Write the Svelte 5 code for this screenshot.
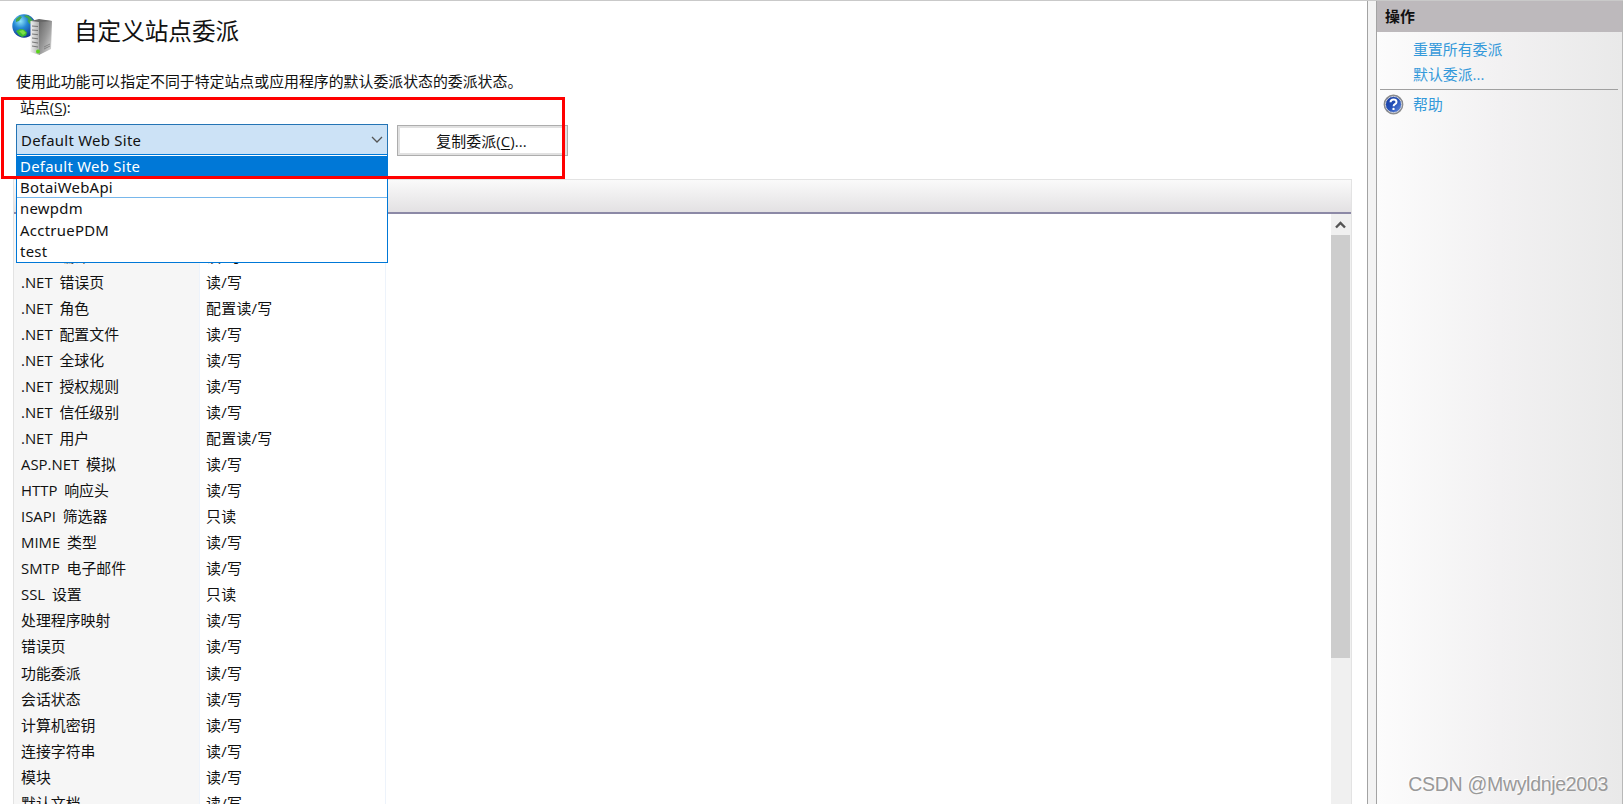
<script>
	const sites = ['Default Web Site', 'BotaiWebApi', 'newpdm', 'AcctruePDM', 'test'];
	let selected = $state(sites[0]);
	let open = $state(true);

	/** @type {[string, string][]} */
	const features = [
		['.NET 编译', '读/写'],
		['.NET 错误页', '读/写'],
		['.NET 角色', '配置读/写'],
		['.NET 配置文件', '读/写'],
		['.NET 全球化', '读/写'],
		['.NET 授权规则', '读/写'],
		['.NET 信任级别', '读/写'],
		['.NET 用户', '配置读/写'],
		['ASP.NET 模拟', '读/写'],
		['HTTP 响应头', '读/写'],
		['ISAPI 筛选器', '只读'],
		['MIME 类型', '读/写'],
		['SMTP 电子邮件', '读/写'],
		['SSL 设置', '只读'],
		['处理程序映射', '读/写'],
		['错误页', '读/写'],
		['功能委派', '读/写'],
		['会话状态', '读/写'],
		['计算机密钥', '读/写'],
		['连接字符串', '读/写'],
		['模块', '读/写'],
		['默认文档', '读/写']
	];

	/** @param {string} site */
	const choose = (site) => {
		selected = site;
		open = false;
	};
</script>

<div class="window">
	<main>
		<header>
			<svg class="logo" width="44" height="44" viewBox="0 0 44 44">
				<defs>
					<radialGradient id="globe" cx=".35" cy=".3" r=".75">
						<stop offset="0" stop-color="#8fe4f8" />
						<stop offset=".4" stop-color="#2688d5" />
						<stop offset="1" stop-color="#12328c" />
					</radialGradient>
					<linearGradient id="front">
						<stop offset="0" stop-color="#f0f0f0" />
						<stop offset="1" stop-color="#aaa" />
					</linearGradient>
					<linearGradient id="side" x2="1" y2="1">
						<stop offset="0" stop-color="#666" />
						<stop offset=".5" stop-color="#999" />
						<stop offset="1" stop-color="#e0e0e0" />
					</linearGradient>
				</defs>
				<circle cx="13" cy="13" r="11.7" fill="url(#globe)" />
				<path d="M13 3q4-2 7 2 3 3 3.500 6l-3-1-2 1-2-3 1-2zM5 6l4-3 2 1-3 4-3 1z" fill="#42a84d" />
				<path d="M5 18l4-2 4 .5 3 3-1 3-4 1.500q-4-2-6-6z" fill="#3dbb30" />
				<path d="M8 18l4-1 3 3-3 2z" fill="#7cdf48" />
				<path d="M19.500 8l9-1v35l-9-3z" fill="url(#front)" />
				<path d="M28 7l13 1-1 28-12 6z" fill="url(#side)" />
				<path d="M20 8l8-2 13 2-13 1z" fill="#666" />
				<path d="M21 13l6 .5M21 17l6 .5M21 21l6 .7M21 25l6 .8M21 29l6 1M21 33l6 1" stroke="#777" />
				<path d="M33 34l6-3M33 36l6-3" stroke="#777" stroke-width=".8" />
				<circle cx="27" cy="38.500" r="2" fill="#5ad21b" />
			</svg>
			<h1>自定义站点委派</h1>
		</header>

		<p>使用此功能可以指定不同于特定站点或应用程序的默认委派状态的委派状态。</p>

		<div class="label">站点(<u>S</u>):</div>
		<div class="controls">
			<div class="combo">
				<button class="value" onclick={() => (open = !open)}>
					<span>{selected}</span>
					<svg width="12" height="8" viewBox="0 0 12 8">
						<path d="M1 1l5 5 5-5" fill="none" stroke="#555" stroke-width="1.3" />
					</svg>
				</button>
				{#if open}
					<ul>
						{#each sites as site}
							<li class:selected={site === selected}>
								<button onclick={() => choose(site)}>{site}</button>
							</li>
						{/each}
					</ul>
				{/if}
			</div>
			<button class="copy">复制委派(<u>C</u>)...</button>
			<div class="highlight"></div>
		</div>

		<section class="list">
			<div class="head"></div>
			<div class="body">
				<div class="rows">
					<div class="group"></div>
					{#each features as [name, delegation]}
						<div class="row">
							<span>{name}</span>
							<span>{delegation}</span>
						</div>
					{/each}
				</div>
				<div class="scrollbar">
					<svg width="19" height="21" viewBox="0 0 19 21">
						<path d="M5 13.500l4.500-4.500 4.500 4.500" fill="none" stroke="#555" stroke-width="2.4" />
					</svg>
					<div class="thumb"></div>
				</div>
			</div>
		</section>
	</main>

	<div class="splitter"></div>

	<aside>
		<h2>操作</h2>
		<a href="#reset">重置所有委派</a>
		<a href="#default">默认委派...</a>
		<hr />
		<div class="help">
			<svg width="21" height="21" viewBox="0 0 21 21">
				<defs>
					<linearGradient id="ball" x2="1" y2="1">
						<stop offset="0" stop-color="#173a9d" />
						<stop offset=".5" stop-color="#2450b8" />
						<stop offset="1" stop-color="#7397e6" />
					</linearGradient>
				</defs>
				<circle cx="10.5" cy="10.5" r="9.2" fill="url(#ball)" stroke="#8b8b8b" stroke-width="1.4" />
				<circle cx="10.5" cy="10.5" r="8.1" fill="none" stroke="#d5d5d5" />
				<path d="M7.5 8.3q.2-2.800 3-2.800t3 2.400q0 1.300-1.500 2.200-1.400.8-1.400 2.100" fill="none" stroke="#fff" stroke-width="2" />
				<circle cx="10.5" cy="14.9" r="1.2" fill="#fff" />
			</svg>
			<a href="#help">帮助</a>
		</div>
		<div class="watermark">CSDN @Mwyldnje2003</div>
	</aside>
</div>

<style>
	:global(body) {
		margin: 0;
		overflow: hidden;
	}

	.window {
		display: flex;
		box-sizing: border-box;
		width: 1623px;
		height: 804px;
		overflow: hidden;
		border-top: 1px solid #c9c9c9;
		background: #fff;
		color: #111;
		font: 14.9px/20px 'Open Sans', 'Noto Sans CJK SC', sans-serif;
	}

	button {
		font: inherit;
		color: inherit;
		text-align: left;
	}

	main {
		display: flex;
		flex-direction: column;
		box-sizing: border-box;
		width: 1367px;
		padding: 12px 15px 0 13px;
	}

	header {
		display: flex;
		gap: 19px;
		height: 44px;
	}

	.logo {
		margin-left: -2px;
	}

	h1 {
		margin: 0;
		font-size: 23.6px;
		font-weight: 400;
		line-height: 37px;
	}

	p {
		margin: 14px 0 0 3px;
		white-space: nowrap;
	}

	.label {
		margin: 6px 0 0 7px;
	}

	u {
		text-underline-offset: 2px;
	}

	.controls {
		position: relative;
		display: flex;
		gap: 9px;
		margin: 7px 0 0 3px;
	}

	.combo {
		position: relative;
		width: 372px;
		letter-spacing: 0.28px;
	}

	.value {
		display: flex;
		align-items: center;
		justify-content: space-between;
		box-sizing: border-box;
		width: 100%;
		height: 31px;
		padding: 0 4px;
		border: 1px solid #2474b5;
		border-radius: 0;
		background: #cce2f6;
		font-family: 'Noto Sans', sans-serif;
		letter-spacing: inherit;
	}

	ul {
		position: absolute;
		z-index: 1;
		top: 30px;
		left: 0;
		box-sizing: border-box;
		width: 372px;
		height: 109px;
		margin: 0;
		padding: 1px 0 0;
		border: 1px solid #0078d7;
		background: #fff;
		list-style: none;
		font-family: 'Noto Sans', sans-serif;
	}

	li {
		box-sizing: border-box;
		height: 21.2px;
	}

	li:nth-child(2) {
		border-bottom: 1px solid #78b7eb;
	}

	li.selected {
		background: #0078d7;
		color: #fff;
	}

	li button {
		display: block;
		width: 100%;
		height: 20px;
		padding: 0 3px;
		border: 0;
		background: none;
		letter-spacing: inherit;
	}

	.copy {
		box-sizing: border-box;
		width: 171px;
		height: 31px;
		margin-top: 1px;
		padding: 0 2px 0 0;
		border: 1px solid #adadad;
		border-radius: 0;
		box-shadow: inset 0 0 0 2px #e1e1e1;
		background: #fff;
		letter-spacing: 0.1px;
		text-align: center;
	}

	/* marks the site picker and the copy button */
	.highlight {
		position: absolute;
		z-index: 2;
		top: -27px;
		left: -15px;
		box-sizing: border-box;
		width: 564px;
		height: 82px;
		border: 3px solid #f00;
		pointer-events: none;
	}

	.list {
		display: flex;
		flex: 1;
		flex-direction: column;
		min-height: 0;
		margin-top: 23px;
		border: solid #e3e3e3;
		border-width: 1px 1px 0;
		overflow: hidden;
	}

	.head {
		flex: none;
		height: 32px;
		border-bottom: 2px solid #8c89a6;
		background: linear-gradient(#fafafa, #e3e1e3);
	}

	.body {
		display: flex;
		justify-content: space-between;
		flex: 1;
		min-height: 0;
	}

	.rows {
		width: 371px;
		border-right: 1px solid #edf3fb;
		background: linear-gradient(90deg, #f6f6f6 185px, #edf3fb 185px, #edf3fb 186px, #fff 186px);
	}

	.group {
		height: 28.5px;
	}

	.row {
		display: grid;
		grid-template-columns: 185px 1fr;
		height: 26.07px;
		line-height: 26px;
		word-spacing: 3px;
	}

	.row span {
		padding-left: 7px;
		white-space: pre;
	}

	.row span:last-child {
		letter-spacing: 0.3px;
	}

	.scrollbar {
		width: 20px;
		background: #f0f0f0;
	}

	.scrollbar svg {
		display: block;
	}

	.thumb {
		width: 19px;
		height: 423px;
		background: #cdcdcd;
	}

	.splitter {
		box-sizing: border-box;
		width: 10px;
		border: solid #a3a3a3;
		border-width: 0 1px;
		background: #f3f3f3;
	}

	aside {
		display: flex;
		flex-direction: column;
		box-sizing: border-box;
		width: 246px;
		border-right: 1px solid #b8b8b8;
		background: linear-gradient(90deg, #fcfcfc, #f2f1f2 50%, #e9e9e9);
	}

	h2 {
		margin: 0 0 5px;
		padding: 0 0 1px 8px;
		background: #bdb9bc;
		font-size: 14.9px;
		line-height: 30px;
	}

	a {
		padding-left: 36px;
		color: #3499da;
		line-height: 24.5px;
		text-decoration: none;
	}

	hr {
		width: 238px;
		height: 1px;
		margin: 3px 4px 0 auto;
		border: 0;
		background: #a0a0a0;
	}

	.help {
		display: flex;
		align-items: center;
		gap: 9px;
		margin: 2px 0 0 6px;
	}

	.help a {
		padding: 0;
	}

	.watermark {
		margin: auto 14px 8px auto;
		color: #999;
		font: 19.5px/24px 'Liberation Sans', sans-serif;
		letter-spacing: -0.3px;
		text-shadow: -1px -1px 0 #fff;
	}
</style>
